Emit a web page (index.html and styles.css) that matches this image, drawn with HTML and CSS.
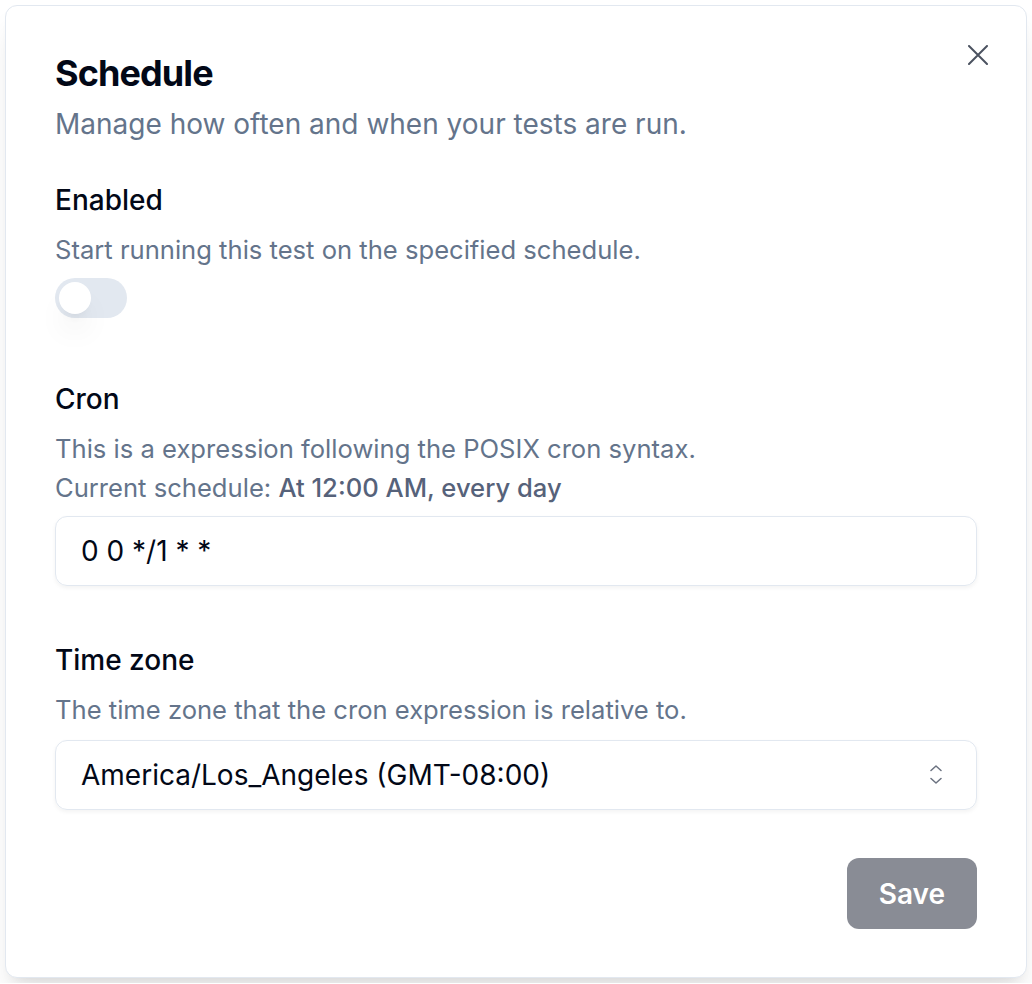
FILE: index.html
```html
<!DOCTYPE html>
<html lang="en">
<head>
<meta charset="utf-8">
<title>Schedule</title>
<link rel="stylesheet" href="styles.css">
</head>
<body>
<div class="dialog">
  <button class="close" aria-label="Close">
    <svg width="20" height="20" viewBox="0 0 20 20" fill="none" stroke="currentColor" stroke-width="2" stroke-linecap="round"><path d="M1 1 19 19M19 1 1 19"/></svg>
  </button>
  <header class="header">
    <h2 class="title">Schedule</h2>
    <p class="subtitle">Manage how often and when your tests are run.</p>
  </header>

  <section class="field field-enabled">
    <div class="label">Enabled</div>
    <p class="desc">Start running this test on the specified schedule.</p>
    <div class="switch"><span class="thumb"></span></div>
  </section>

  <section class="field field-cron">
    <div class="label">Cron</div>
    <p class="desc">This is a expression following the POSIX cron syntax.<br>Current schedule: <strong>At 12:00 AM, every day</strong></p>
    <div class="input">0 0 */1 * *</div>
  </section>

  <section class="field field-tz">
    <div class="label">Time zone</div>
    <p class="desc">The time zone that the cron expression is relative to.</p>
    <div class="input select">
      <span>America/Los_Angeles (GMT-08:00)</span>
      <svg width="12" height="19" viewBox="0 0 12 19" fill="none" stroke="#6b7280" stroke-width="1.5" stroke-linecap="round" stroke-linejoin="round"><path d="M1 5.5 6 1l5 4.5M1 13.5 6 18l5-4.5"/></svg>
    </div>
  </section>

  <footer class="footer">
    <button class="save">Save</button>
  </footer>
</div>
</body>
</html>
```

FILE: styles.css
```css
* { box-sizing: border-box; }
html, body { margin: 0; background: #ffffff; }
body {
  font-family: Inter, "Noto Sans", sans-serif;
  padding: 5px;
}
.dialog {
  position: relative;
  width: 1022px;
  height: 973px;
  border: 1px solid #e2e8f0;
  border-radius: 12px;
  background: #fff;
  box-shadow: 0 20px 30px -6px rgba(0,0,0,0.10), 0 8px 12px -8px rgba(0,0,0,0.10);
  padding: 47px 49px 48px;
  display: flex;
  flex-direction: column;
}
.close {
  position: absolute;
  top: 39px;
  right: 38px;
  background: none;
  border: 0;
  padding: 0;
  color: #4b5260;
  width: 20px;
  height: 20px;
  display: flex;
}
.title {
  margin: 0;
  font-size: 36px;
  line-height: 40px;
  font-weight: 700;
  color: #020817;
  letter-spacing: -0.9px;
}
.subtitle {
  margin: 11px 0 0;
  font-size: 28px;
  line-height: 40px;
  color: #64748b;
}
.field { display: flex; flex-direction: column; }
.field-enabled { margin-top: 36px; }
.field-cron { margin-top: 61px; }
.field-tz { margin-top: 54px; }
.label {
  font-size: 28px;
  line-height: 40px;
  font-weight: 500;
  color: #020817;
}
.desc {
  margin: 11px 0 0;
  font-size: 25.6px;
  line-height: 38.4px;
  color: #64748b;
}
.desc strong { font-weight: 500; color: #56627a; }
.switch {
  margin-top: 9px;
  width: 72px;
  height: 40px;
  border-radius: 20px;
  background: #e2e8f0;
  padding: 4px;
}
.thumb {
  display: block;
  width: 32px;
  height: 32px;
  border-radius: 50%;
  background: #fff;
  box-shadow: 0 20px 30px -6px rgba(0,0,0,0.10), 0 8px 12px -8px rgba(0,0,0,0.10);
}
.input {
  margin-top: 9px;
  height: 70px;
  border: 1px solid #e2e8f0;
  border-radius: 12px;
  box-shadow: 0 2px 4px rgba(0,0,0,0.05);
  padding: 0 25px;
  display: flex;
  align-items: center;
  font-size: 28px;
  color: #020817;
}
.select {
  margin-top: 10px;
  justify-content: space-between;
  padding-right: 34px;
}
.footer {
  margin-top: auto;
  display: flex;
  justify-content: flex-end;
}
.save {
  height: 71px;
  padding: 0 32px;
  border: 0;
  border-radius: 12px;
  background: #898c95;
  color: #fff;
  font-family: Inter, sans-serif;
  font-size: 28px;
  font-weight: 600;
}
```
